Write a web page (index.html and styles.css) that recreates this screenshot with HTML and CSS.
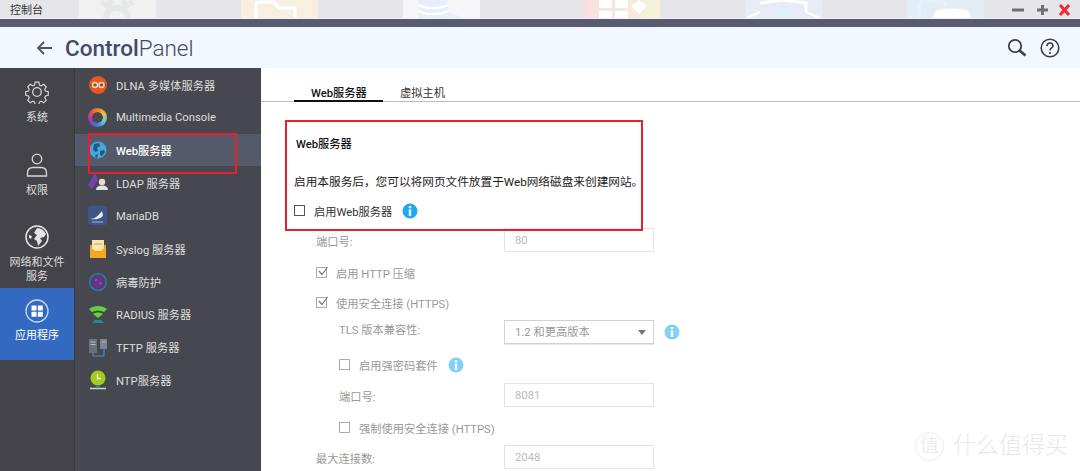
FILE: index.html

```html
<!DOCTYPE html>
<html>
<head>
  <title>ControlPanel</title>
  <link rel="stylesheet" href="styles.css">
</head>
<body>
  <div class="strip">
    <div class="strip-title">控制台</div>
    <div class="tile tile-gear">
      <svg width="77" height="18" viewBox="0 0 77 18"><path d="M22 2l7 4 3-6M54 2l-7 4-3-6M27 18c0-6 5-10 11-10s11 4 11 10" fill="none" stroke="#e6e8e7" stroke-width="6"/></svg>
    </div>
    <div class="tile tile-folder">
      <svg width="77" height="18" viewBox="0 0 77 18"><path d="M15 18V5c0-2 1-3 3-3h15l5 6h16v10" fill="none" stroke="#fff" stroke-width="3"/></svg>
    </div>
    <div class="tile tile-db">
      <svg width="77" height="18" viewBox="0 0 77 18"><path d="M15 0h30v12l17 6H15z" fill="#e8eefa"/><path d="M15 5c8 4 22 4 30 0M15 11c8 4 22 4 30 0" fill="none" stroke="#fff" stroke-width="2"/></svg>
    </div>
    <div class="tile tile-grid tile-wide-gap">
      <svg width="77" height="18" viewBox="0 0 77 18"><path d="M16 0h13v8H16zM32 0h13v8H32zM16 11h13v7H16zM32 11h13v7H32zM56 0l8 6-8 8-8-8z" fill="#fff"/></svg>
    </div>
    <div class="tile tile-shield">
      <svg width="77" height="18" viewBox="0 0 77 18"><path d="M15 3l23-3 23 3v9" fill="none" stroke="#fff" stroke-width="3"/><path d="M2 18l13-6M75 18l-14-6" stroke="#fff" stroke-width="2"/><path d="M28 18l10-11 6 4 5 7z" fill="#dff0f8"/></svg>
    </div>
    <div class="tile tile-cloud">
      <svg width="77" height="18" viewBox="0 0 77 18"><path d="M12 18V6c0-3 2-5 5-5h16c3 0 5 2 5 5" fill="none" stroke="#e4f3fb" stroke-width="4"/><path d="M26 18c0-5 3-8 7-8 3-2 20-2 24 0 4 0 7 3 7 8z" fill="#fff"/></svg>
    </div>
    <div class="win-btns">
      <svg width="58" height="12" viewBox="0 0 58 12">
        <path d="M0 6h12" stroke="#6d7078" stroke-width="3"/>
        <path d="M25 6h11M30.500 1v10" stroke="#6d7078" stroke-width="3"/>
        <path d="M48 1l9 10M57 1l-9 10" stroke="#ee2a33" stroke-width="3"/>
      </svg>
    </div>
  </div>
  <div class="darkbar"></div>

  <header class="topbar">
    <svg class="back" width="16" height="14" viewBox="0 0 16 14"><path d="M16 7H2M8 1L2 7l6 6" fill="none" stroke="#50546e" stroke-width="1.800"/></svg>
    <div class="brand"><b>Control</b>Panel</div>
    <div class="top-tools">
      <svg width="20" height="20" viewBox="0 0 20 20"><circle cx="8" cy="8" r="6.200" fill="none" stroke="#3c3f48" stroke-width="1.800"/><path d="M12.500 12.500l6 5" stroke="#3c3f48" stroke-width="2.600"/></svg>
      <svg width="20" height="20" viewBox="0 0 20 20"><circle cx="10" cy="10" r="8.800" fill="none" stroke="#3c3f48" stroke-width="1.600"/><path d="M7 8c0-4 6-4 6 0 0 2-3 2-3 4.500" fill="none" stroke="#3c3f48" stroke-width="1.600"/><circle cx="10" cy="15" r="1.100" fill="#3c3f48"/></svg>
    </div>
  </header>

  <div class="main">
    <nav class="rail">
      <div class="rail-item item-1">
        <svg width="24" height="24" viewBox="0 0 24 24"><path d="M10 1h4l.7 3.200 2 .9 2.800-1.700 2.800 2.800-1.700 2.800.8 2 3.100.7v4l-3.100.7-.8 2 1.700 2.800-2.800 2.800-2.800-1.700-2 .9-.7 3.200h-4l-.7-3.200-2-.9-2.800 1.700-2.800-2.800 1.700-2.800-.8-2-3.100-.7v-4l3.100-.7.800-2-1.700-2.800 2.800-2.800 2.800 1.700 2-.9z" transform="translate(1.200 1.200) scale(.9)" fill="none" stroke="#d8d8d8" stroke-width="1.300"/><circle cx="12" cy="12" r="4.300" fill="none" stroke="#d8d8d8" stroke-width="1.300"/></svg>
        <span>系统</span>
      </div>
      <div class="rail-item">
        <svg width="24" height="24" viewBox="0 0 24 24"><circle cx="12" cy="6" r="4.800" fill="none" stroke="#d8d8d8" stroke-width="1.300"/><path d="M2.500 23v-3c0-4 2.500-5.500 5.500-5.500h8c3 0 5.500 1.500 5.500 5.500v3z" fill="none" stroke="#d8d8d8" stroke-width="1.300"/></svg>
        <span>权限</span>
      </div>
      <div class="rail-item">
        <svg width="24" height="24" viewBox="0 0 24 24"><circle cx="12" cy="12" r="11" fill="none" stroke="#e4e4e4" stroke-width="1.500"/><path d="M12 3c4 0 7 2 9 6l-2 3-4 1 2 3-4 5-1-5-3-2 3-4-3-2zM4 10l3 1-1 3-2-1z" fill="#e4e4e4"/></svg>
        <span>网络和文件<br>服务</span>
      </div>
      <div class="rail-item active">
        <svg width="24" height="24" viewBox="0 0 24 24"><circle cx="12" cy="12" r="11" fill="none" stroke="#c9d8f2" stroke-width="1.300"/><path d="M6.500 6.500h5v5h-5zM12.800 6.500h5v5h-5zM6.500 12.800h5v5h-5zM12.800 12.800h5v5h-5z" fill="#fff"/></svg>
        <span>应用程序</span>
      </div>
    </nav>

    <aside class="sublist">
      <div class="sub-item">
        <svg class="sub-icon" viewBox="0 0 22 22"><circle cx="11" cy="11" r="9" fill="#e4591e"/><path d="M3 11h16" stroke="#47474f" stroke-width="1"/><circle cx="8" cy="11" r="2.500" fill="none" stroke="#f6d2bd" stroke-width="1.500"/><circle cx="14.500" cy="11" r="2.500" fill="none" stroke="#f6d2bd" stroke-width="1.500"/></svg>
        <span>DLNA 多媒体服务器</span>
      </div>
      <div class="sub-item">
        <span class="sub-icon mm-ring"></span>
        <span>Multimedia Console</span>
      </div>
      <div class="sub-item selected">
        <svg class="sub-icon" viewBox="0 0 22 22"><circle cx="11" cy="11" r="8.500" fill="#3fa9dd"/><path d="M7 5l5-1 1 3-3 2 1 3-3 1-2-3zM13 12l4-1 1 2-3 4-2-1zM9 15l2 1-1 3-2-1z" fill="#25587e"/></svg>
        <span class="sub-strong">Web服务器</span>
      </div>
      <div class="sub-item">
        <svg class="sub-icon" viewBox="0 0 22 22"><path d="M8 1l3 7-6 9-4-4z" fill="#7045a8"/><circle cx="15" cy="10" r="3.200" fill="#efd9c4"/><path d="M9 18c0-3 2-4.500 6-4.500s6 1.500 6 4.500z" fill="#dfe3e6"/></svg>
        <span>LDAP 服务器</span>
      </div>
      <div class="sub-item">
        <svg class="sub-icon" viewBox="0 0 22 22"><rect x="1" y="1" width="19" height="19" rx="3" fill="#3d5588"/><path d="M3 14c5 0 8-3 12-8l1 4c-1 3-5 5-13 4z" fill="#e8edf5"/><path d="M5 17h11" stroke="#a9b6cf" stroke-width="1"/></svg>
        <span>MariaDB</span>
      </div>
      <div class="sub-item">
        <svg class="sub-icon" viewBox="0 0 22 22"><rect x="3" y="7" width="16" height="13" fill="#f09a1e"/><rect x="5" y="2" width="12" height="11" fill="#fbe6ad"/><path d="M3 9l8 6 8-6v11H3z" fill="#f5a623"/><path d="M7 6h8" stroke="#d8a03c" stroke-width="1"/></svg>
        <span>Syslog 服务器</span>
      </div>
      <div class="sub-item">
        <svg class="sub-icon" viewBox="0 0 22 22"><circle cx="11" cy="11" r="8.300" fill="none" stroke="#2f78b8" stroke-width="1.600"/><circle cx="11" cy="11" r="5.500" fill="#6b2f96"/><circle cx="9" cy="9" r="1" fill="#9a63c2"/><circle cx="13.500" cy="12.500" r="1" fill="#9a63c2"/></svg>
        <span>病毒防护</span>
      </div>
      <div class="sub-item">
        <svg class="sub-icon" viewBox="0 0 22 22"><path d="M2 6c5-4 13-4 18 0l-3 3c-4-2-8-2-12 0zM6 11c3-2 7-2 10 0l-5 4z" fill="#62d33a"/><path d="M5 20l3-3h6l3 3z" fill="#1f8f8c"/></svg>
        <span>RADIUS 服务器</span>
      </div>
      <div class="sub-item">
        <svg class="sub-icon" viewBox="0 0 22 22"><rect x="2" y="3" width="8" height="14" fill="#68717a"/><rect x="13" y="3" width="7" height="10" fill="#7c858d"/><path d="M6 17v3h11v-7" fill="none" stroke="#3b93d2" stroke-width="1.200"/><path d="M3.500 6h5M3.500 8.500h5M14.500 6h4" stroke="#b9c0c6" stroke-width="1"/></svg>
        <span>TFTP 服务器</span>
      </div>
      <div class="sub-item">
        <svg class="sub-icon" viewBox="0 0 22 22"><circle cx="11" cy="9" r="7.500" fill="#a4cc1f"/><path d="M10.500 5v4.500H14" fill="none" stroke="#f3f8dc" stroke-width="1.300"/><path d="M9 16h4v2H9z" fill="#1d8d8c"/><path d="M3 19.500h16" stroke="#c9ccd1" stroke-width="1.600"/></svg>
        <span>NTP服务器</span>
      </div>
    </aside>

    <section class="content">
      <div class="tabs">
        <div class="tab tab-on">Web服务器</div>
        <div class="tab">虚拟主机</div>
      </div>
      <div class="form">
        <div class="form-title">Web服务器</div>
        <div class="form-desc">启用本服务后，您可以将网页文件放置于Web网络磁盘来创建网站。</div>
        <div class="row check">
          <span class="box"></span><span>启用Web服务器</span>
          <svg class="info" viewBox="0 0 16 16"><circle cx="8" cy="8" r="7.500" fill="#1fa8f4"/><path d="M6.800 3h2.400v2.200H6.800zM6.800 6.500h2.400V13H6.800z" fill="#fff"/></svg>
        </div>
        <div class="row field off">
          <label class="in-1">端口号:</label><div class="input">80</div>
        </div>
        <div class="row check off in-1">
          <span class="box ticked"><svg viewBox="0 0 11 11"><path d="M2 5l3 3.500L10.500 1" fill="none" stroke="#777" stroke-width="1.200"/></svg></span><span>启用 HTTP 压缩</span>
        </div>
        <div class="row check off in-1 tight">
          <span class="box ticked"><svg viewBox="0 0 11 11"><path d="M2 5l3 3.500L10.500 1" fill="none" stroke="#777" stroke-width="1.200"/></svg></span><span>使用安全连接 (HTTPS)</span>
        </div>
        <div class="row field off">
          <label class="in-2 lift">TLS 版本兼容性:</label>
          <div class="input select">1.2 和更高版本<i class="caret"></i></div>
          <svg class="info info-pale" viewBox="0 0 16 16"><circle cx="8" cy="8" r="7.500" fill="#1fa8f4"/><path d="M6.800 3h2.400v2.200H6.800zM6.800 6.500h2.400V13H6.800z" fill="#fff"/></svg>
        </div>
        <div class="row check off in-2">
          <span class="box"></span><span>启用强密码套件</span>
          <svg class="info info-pale" viewBox="0 0 16 16"><circle cx="8" cy="8" r="7.500" fill="#1fa8f4"/><path d="M6.800 3h2.400v2.200H6.800zM6.800 6.500h2.400V13H6.800z" fill="#fff"/></svg>
        </div>
        <div class="row field off after-strong">
          <label class="in-2">端口号:</label><div class="input">8081</div>
        </div>
        <div class="row check off in-2">
          <span class="box"></span><span>强制使用安全连接 (HTTPS)</span>
        </div>
        <div class="row field off">
          <label class="in-1">最大连接数:</label><div class="input">2048</div>
        </div>
      </div>
      <div class="note-box"></div>
      <div class="watermark"><span class="wm-logo">值</span><span>什么值得买</span></div>
    </section>
  </div>
  <div class="note-box-side"></div>
</body>
</html>
```

FILE: styles.css

```css
* { box-sizing: border-box; }
body { margin: 0; height: 471px; overflow: hidden; position: relative; display: flex; flex-direction: column; background: #fff; font-family: Roboto, "Noto Sans CJK SC", sans-serif; font-size: 11.25px; color: #222; }

.strip { height: 19px; flex: none; display: flex; background: #e6e6ea; border-bottom: 1px solid #f3f3f5; overflow: hidden; }
.strip-title { width: 79px; flex: none; padding: 1px 0 0 10px; font-size: 11px; line-height: 19px; color: #333; }
.tile { width: 77px; height: 18px; flex: none; margin-right: 85px; }
.tile svg { display: block; }
.tile-wide-gap { margin-left: 18px; }
.tile-gear { background: #f1f1f1; }
.tile-folder { background: #f9eee2; }
.tile-db { background: #f6f6f8; }
.tile-grid { background: linear-gradient(90deg, #f7e0e0, #f5f3d8); }
.tile-shield { background: #e7ecf6; }
.tile-cloud { background: #e3edf6; margin-right: 0; }
.win-btns { margin-left: 28px; padding-top: 4px; }
.win-btns svg { display: block; }

.darkbar { height: 8px; flex: none; background: #595b70; }

.topbar { height: 41px; flex: none; display: flex; align-items: center; background: #f3f7fe; padding: 0 20px 0 36px; }
.back { flex: none; }
.brand { margin-left: 13px; font-size: 22.5px; font-weight: 300; color: #454a68; }
.brand b { font-weight: 500; }
.top-tools { margin-left: auto; display: flex; gap: 13px; align-items: center; }
.top-tools svg { display: block; }

.main { flex: 1; display: flex; min-height: 0; }

.rail { width: 75px; flex: none; padding-top: 4px; background: #434349; border-right: 1px solid #38383d; }
.rail-item { height: 72px; display: flex; flex-direction: column; align-items: center; padding-top: 9px; color: #ddd; font-size: 11px; line-height: 14px; text-align: center; }
.rail-item svg { display: block; margin-bottom: 7px; flex: none; }
.rail-item.item-1 { padding-top: 8px; }
.rail-item.active { background: #3369c0; color: #fff; padding-top: 11px; }
.rail-item.active svg { margin-bottom: 6px; }

.sublist { width: 186px; flex: none; background: #47474f; }
.sub-item { height: 32.8px; display: flex; align-items: center; gap: 7px; padding: 1px 0 0 12px; color: #dedede; }
.sub-item.selected { background: #545a6a; }
.sub-strong { color: #fff; font-weight: 500; }
.sub-icon { width: 22px; height: 22px; flex: none; display: block; }
.mm-ring { width: 19px; height: 19px; margin: 0 2px 0 1px; border-radius: 50%; background: radial-gradient(circle, #47474f 0 5px, transparent 5.500px), conic-gradient(#e8862a, #e4c53a, #6ec4e0, #3b7fd8, #8a3fc0, #e0445e, #e8862a); }

.content { flex: 1; position: relative; min-width: 0; }
.tabs { height: 34px; display: flex; padding-left: 33px; border-bottom: 1px solid #bdbdbd; }
.tab { height: 34px; padding: 19px 17px 0 17px; line-height: 14px; color: #333; white-space: nowrap; }
.tab-on { width: 89px; font-weight: 500; color: #111; border-bottom: 2px solid #111; }

.form { padding: 36px 0 0 33px; }
.form-title { margin-left: 2px; font-weight: 500; line-height: 14px; color: #111; }
.form-desc { margin-top: 23px; font-size: 11.66px; line-height: 14px; color: #1a1a1a; }
.row { height: 24px; margin-top: 6px; }
.form-desc + .row { margin-top: 9px; }
.check { display: flex; align-items: center; gap: 9px; color: #333; padding-top: 1px; }
.check.in-1 { padding-left: 22px; }
.check.in-2 { padding-left: 45px; }
.field { display: grid; grid-template-columns: 210px 150px auto; align-items: center; }
.field label { padding-top: 1px; }
.field + .check { margin-top: 8px; }
.check.tight { margin-top: 6px; }
.field.after-strong { margin-top: 7px; }
.off { color: #999; }
.in-1 { padding-left: 22px; }
.in-2 { padding-left: 45px; }
.field label.lift { padding-top: 0; padding-bottom: 6px; }

.box { width: 11px; height: 11px; flex: none; border: 1px solid #555; background: #fff; position: relative; }
.off .box { border-color: #aaa; }
.box.ticked svg { position: absolute; left: 0; top: -2px; width: 11px; height: 11px; overflow: visible; }
.info { width: 16px; height: 16px; margin-left: 1px; flex: none; display: block; }
.info-pale { opacity: 0.55; }
.field .info { margin-left: 10px; }

.input { height: 24px; border: 1px solid #e4e4e4; padding-left: 10px; line-height: 24px; color: #bbb; }
.input.select { position: relative; border-color: #d2d2d2; box-shadow: 0 1px 0 #e8e8e8; color: #999; }
.caret { position: absolute; right: 7px; top: 9px; border-left: 4px solid transparent; border-right: 4px solid transparent; border-top: 5px solid #777; }

.note-box { position: absolute; left: 24px; top: 52px; width: 358px; height: 111px; border: 2px solid #e8202e; }
.note-box-side { position: absolute; left: 88px; top: 133px; width: 149px; height: 41px; border: 2px solid #e8202e; }

.watermark { position: absolute; left: 654px; top: 363px; display: flex; align-items: center; gap: 9px; font-size: 23px; font-weight: 300; line-height: 30px; color: #e8e8e8; }
.wm-logo { width: 29px; height: 29px; border-radius: 50%; border: 1px solid #ececec; font-size: 19px; line-height: 26px; text-align: center; }
```
